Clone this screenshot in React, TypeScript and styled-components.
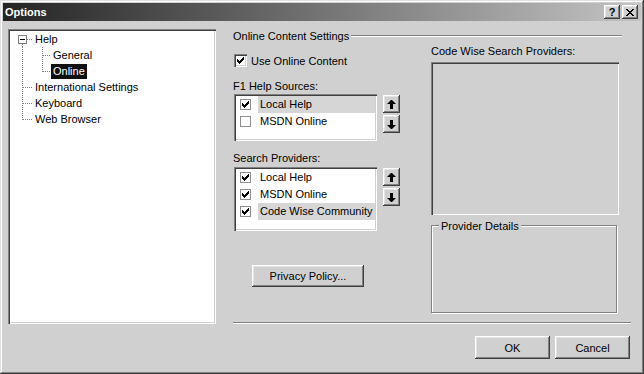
import React from "react";
import styled, { createGlobalStyle } from "styled-components";

const FACE = "#d0d0d0";

const GlobalStyle = createGlobalStyle`
  html, body {
    margin: 0;
    padding: 0;
    background: ${FACE};
  }
  body {
    font-family: "Liberation Sans", Arial, sans-serif;
    font-size: 11px;
    color: #000;
  }
  * {
    box-sizing: border-box;
  }
`;

const sunken = `
  box-shadow: inset 1px 1px #808080, inset 2px 2px #404040,
    inset -1px -1px #ffffff, inset -2px -2px ${FACE};
`;

const raised = `
  box-shadow: inset -1px -1px #404040, inset 1px 1px #ffffff,
    inset -2px -2px #808080, inset 2px 2px #e4e4e4;
`;

type TreeItem = {
  label: string;
  level: 0 | 1;
  main: "full" | "top" | "bottom";
  branch?: "full" | "top";
  expander?: boolean;
  selected?: boolean;
};

const treeItems: TreeItem[] = [
  { label: "Help", level: 0, main: "bottom", expander: true },
  { label: "General", level: 1, main: "full", branch: "full" },
  { label: "Online", level: 1, main: "full", branch: "top", selected: true },
  { label: "International Settings", level: 0, main: "full" },
  { label: "Keyboard", level: 0, main: "full" },
  { label: "Web Browser", level: 0, main: "top" },
];

const helpSources = [
  { label: "Local Help", checked: true, selected: true },
  { label: "MSDN Online", checked: false },
];

const searchProviders = [
  { label: "Local Help", checked: true },
  { label: "MSDN Online", checked: true },
  { label: "Code Wise Community", checked: true, selected: true },
];

const TreeGuide = ({ level, main, branch, expander }: TreeItem) => {
  const w = level === 0 ? 23 : 41;
  const dots = { stroke: "#808080", strokeWidth: 1, strokeDasharray: "1 1" };
  return (
    <svg width={w} height={16} style={{ flex: "none", display: "block" }}>
      {main === "full" && <line x1={12.5} y1={0} x2={12.5} y2={16} {...dots} />}
      {main === "top" && <line x1={12.5} y1={0} x2={12.5} y2={9} {...dots} />}
      {main === "bottom" && <line x1={12.5} y1={13} x2={12.5} y2={16} {...dots} />}
      {level === 0 && (
        <line x1={expander ? 17 : 13} y1={8.5} x2={23} y2={8.5} {...dots} />
      )}
      {level === 1 && branch && (
        <>
          <line x1={32.5} y1={0} x2={32.5} y2={branch === "full" ? 16 : 9} {...dots} />
          <line x1={33} y1={8.5} x2={41} y2={8.5} {...dots} />
        </>
      )}
      {expander && (
        <>
          <rect x={8.5} y={4.5} width={8} height={8} fill="#fff" stroke="#808080" />
          <path d="M10 8.5h5" stroke="#000" />
        </>
      )}
    </svg>
  );
};

const checkPixels = [
  [6, 0, 1],
  [5, 1, 2],
  [0, 2, 1],
  [4, 2, 3],
  [0, 3, 2],
  [3, 3, 3],
  [0, 4, 5],
  [1, 5, 3],
  [2, 6, 1],
];

const CheckMark = () => (
  <svg width={7} height={7} viewBox="0 0 7 7" style={{ display: "block" }}>
    {checkPixels.map(([x, y, w]) => (
      <rect key={`${x}-${y}`} x={x} y={y} width={w} height={1} fill="#000" />
    ))}
  </svg>
);

const closePixels = [
  [0, 0, 2],
  [6, 0, 2],
  [1, 1, 2],
  [5, 1, 2],
  [2, 2, 4],
  [3, 3, 2],
  [2, 4, 4],
  [1, 5, 2],
  [5, 5, 2],
  [0, 6, 2],
  [6, 6, 2],
];

const CloseGlyph = () => (
  <svg width={8} height={7} viewBox="0 0 8 7" style={{ display: "block" }}>
    {closePixels.map(([x, y, w]) => (
      <rect key={`${x}-${y}`} x={x} y={y} width={w} height={1} fill="#000" />
    ))}
  </svg>
);

const Arrow = ({ down }: { down?: boolean }) => (
  <svg
    width={9}
    height={9}
    viewBox="0 0 9 9"
    style={{ display: "block", transform: down ? "rotate(180deg)" : undefined }}
  >
    <path d="M4 0h1l4 4h-3v5h-3v-5h-3z" fill="#000" />
  </svg>
);

const App = () => {
  return (
    <>
      <GlobalStyle />
      <Window>
        <TitleBar>
          <Title>Options</Title>
          <CaptionButtons>
            <CaptionButton>?</CaptionButton>
            <CaptionButton>
              <CloseGlyph />
            </CaptionButton>
          </CaptionButtons>
        </TitleBar>
        <Body>
          <TreePanel>
            {treeItems.map((item) => (
              <TreeRow key={item.label}>
                <TreeGuide {...item} />
                <TreeLabel $selected={item.selected}>{item.label}</TreeLabel>
              </TreeRow>
            ))}
          </TreePanel>

          <Pane>
            <SectionHeader>
              <span>Online Content Settings</span>
              <Rule />
            </SectionHeader>

            <Columns>
              <LeftCol>
                <CheckRow>
                  <Check3D>
                    <CheckMark />
                  </Check3D>
                  <span>Use Online Content</span>
                </CheckRow>

                <FieldLabel $top={12}>F1 Help Sources:</FieldLabel>
                <ListRow $top={1}>
                  <ListBox $h={47}>
                    {helpSources.map((s) => (
                      <ListItem key={s.label}>
                        <FlatCheck>{s.checked && <CheckMark />}</FlatCheck>
                        <ItemText $selected={s.selected}>{s.label}</ItemText>
                      </ListItem>
                    ))}
                  </ListBox>
                  <MoveButtons>
                    <MoveButton>
                      <Arrow />
                    </MoveButton>
                    <MoveButton>
                      <Arrow down />
                    </MoveButton>
                  </MoveButtons>
                </ListRow>

                <FieldLabel $top={10}>Search Providers:</FieldLabel>
                <ListRow $top={2}>
                  <ListBox $h={64}>
                    {searchProviders.map((s) => (
                      <ListItem key={s.label}>
                        <FlatCheck>{s.checked && <CheckMark />}</FlatCheck>
                        <ItemText $selected={s.selected}>{s.label}</ItemText>
                      </ListItem>
                    ))}
                  </ListBox>
                  <MoveButtons>
                    <MoveButton>
                      <Arrow />
                    </MoveButton>
                    <MoveButton>
                      <Arrow down />
                    </MoveButton>
                  </MoveButtons>
                </ListRow>

                <PrivacyButton>Privacy Policy...</PrivacyButton>
              </LeftCol>

              <RightCol>
                <FieldLabel $top={1}>Code Wise Search Providers:</FieldLabel>
                <ProviderBox />
                <GroupBox>
                  <GroupTitle>Provider Details</GroupTitle>
                </GroupBox>
              </RightCol>
            </Columns>

            <Separator />
            <Footer>
              <DialogButton>OK</DialogButton>
              <DialogButton>Cancel</DialogButton>
            </Footer>
          </Pane>
        </Body>
      </Window>
    </>
  );
};

const Window = styled.div`
  width: 644px;
  height: 374px;
  padding: 3px;
  display: flex;
  flex-direction: column;
  background: ${FACE};
  box-shadow: inset -1px -1px #404040, inset 1px 1px #e0e0e0,
    inset -2px -2px #808080, inset 2px 2px #ffffff;
`;

const TitleBar = styled.div`
  height: 18px;
  flex: none;
  display: flex;
  align-items: center;
  justify-content: space-between;
  padding: 0 3px 0 2px;
  background: linear-gradient(to right, #242424, #c4c4c4);
`;

const Title = styled.span`
  color: #fff;
  font-weight: bold;
  font-size: 11px;
`;

const CaptionButtons = styled.div`
  display: flex;
  gap: 2px;
`;

const CaptionButton = styled.div`
  width: 16px;
  height: 14px;
  display: flex;
  align-items: center;
  justify-content: center;
  background: ${FACE};
  font-weight: bold;
  font-size: 11px;
  line-height: 14px;
  ${raised}
`;

const Body = styled.div`
  flex: 1;
  display: flex;
  align-items: flex-start;
  padding: 8px 10px 12px 5px;
`;

const TreePanel = styled.div`
  width: 208px;
  height: 295px;
  flex: none;
  padding: 2px;
  background: #fff;
  ${sunken}
`;

const TreeRow = styled.div`
  height: 16px;
  display: flex;
  align-items: center;
`;

const TreeLabel = styled.span<{ $selected?: boolean }>`
  padding: 0 2px;
  line-height: 15px;
  white-space: nowrap;
  background: ${(p) => (p.$selected ? "#101010" : "transparent")};
  color: ${(p) => (p.$selected ? "#fff" : "#000")};
`;

const Pane = styled.div`
  flex: 1;
  align-self: stretch;
  margin-left: 17px;
  display: flex;
  flex-direction: column;
`;

const SectionHeader = styled.div`
  height: 14px;
  line-height: 14px;
  display: flex;
  align-items: center;
  margin-right: 9px;
`;

const Rule = styled.div`
  flex: 1;
  height: 2px;
  margin-left: 2px;
  border-top: 1px solid #808080;
  border-bottom: 1px solid #fff;
`;

const Columns = styled.div`
  display: flex;
  gap: 28px;
`;

const LeftCol = styled.div`
  width: 170px;
  display: flex;
  flex-direction: column;
`;

const RightCol = styled.div`
  width: 188px;
  display: flex;
  flex-direction: column;
`;

const CheckRow = styled.div`
  margin-top: 11px;
  height: 13px;
  padding-left: 1px;
  display: flex;
  align-items: center;
  gap: 4px;
`;

const Check3D = styled.div`
  width: 13px;
  height: 13px;
  display: flex;
  align-items: center;
  justify-content: center;
  background: #fff;
  ${sunken}
`;

const FieldLabel = styled.div<{ $top: number }>`
  margin-top: ${(p) => p.$top}px;
  line-height: 14px;
  white-space: nowrap;
`;

const ListRow = styled.div<{ $top: number }>`
  margin-top: ${(p) => p.$top}px;
  display: flex;
  align-items: flex-start;
`;

const ListBox = styled.div<{ $h: number }>`
  width: 143px;
  height: ${(p) => p.$h}px;
  margin-left: 1px;
  padding: 2px;
  background: #fff;
  ${sunken}
`;

const ListItem = styled.div`
  height: 17px;
  display: flex;
  align-items: center;
  padding-left: 4px;
  gap: 7px;
`;

const FlatCheck = styled.div`
  width: 11px;
  height: 11px;
  flex: none;
  display: flex;
  align-items: center;
  justify-content: center;
  border: 1px solid #909090;
  background: #fff;
`;

const ItemText = styled.div<{ $selected?: boolean }>`
  flex: 1;
  height: 17px;
  line-height: 17px;
  padding-left: 2px;
  white-space: nowrap;
  background: ${(p) => (p.$selected ? "#d6d6d6" : "transparent")};
`;

const MoveButtons = styled.div`
  margin-left: 6px;
  padding-top: 1px;
  display: flex;
  flex-direction: column;
  gap: 2px;
`;

const MoveButton = styled.div`
  width: 17px;
  height: 18px;
  display: flex;
  align-items: center;
  justify-content: center;
  background: ${FACE};
  ${raised}
`;

const PushButton = styled.button`
  height: 23px;
  padding: 0;
  border: none;
  background: ${FACE};
  font-family: "Liberation Sans", Arial, sans-serif;
  font-size: 11px;
  color: #000;
  ${raised}
`;

const PrivacyButton = styled(PushButton)`
  width: 112px;
  height: 22px;
  margin-top: 34px;
  margin-left: 19px;
`;

const DialogButton = styled(PushButton)`
  width: 75px;
`;

const ProviderBox = styled.div`
  margin-top: 4px;
  height: 153px;
  background: ${FACE};
  ${sunken}
`;

const GroupBox = styled.div`
  position: relative;
  margin-top: 10px;
  width: 186px;
  height: 88px;
  border: 1px solid #808080;
  box-shadow: inset 1px 1px #fff, 1px 1px #fff;
`;

const GroupTitle = styled.span`
  position: absolute;
  top: -6px;
  left: 7px;
  padding: 0 2px;
  line-height: 12px;
  background: ${FACE};
`;

const Separator = styled.div`
  margin-top: auto;
  height: 2px;
  border-top: 1px solid #808080;
  border-bottom: 1px solid #fff;
`;

const Footer = styled.div`
  margin-top: 12px;
  display: flex;
  justify-content: flex-end;
  gap: 5px;
  padding-right: 1px;
`;

export default App;
